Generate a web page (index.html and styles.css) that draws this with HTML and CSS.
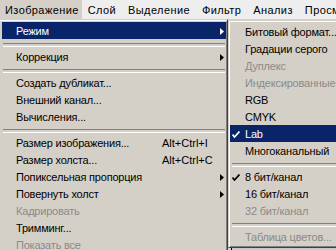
FILE: index.html
```html
<!DOCTYPE html>
<html lang="ru">

<head>
    <meta charset="UTF-8">
    <title>Изображение</title>
    <link rel="stylesheet" href="styles.css">
</head>

<body>
    <ul class="menubar">
        <li class="open">Изображение</li>
        <li>Слой</li>
        <li>Выделение</li>
        <li>Фильтр</li>
        <li>Анализ</li>
        <li>Просмотр</li>
    </ul>
    <div class="drop">
        <ul class="menu main">
            <li class="item hot"><span class="label">Режим</span><svg class="arrow" width="4" height="7" viewBox="0 0 4 7"><polygon points="0,0 4,3.5 0,7"/></svg></li>
            <li class="sep"></li>
            <li class="item"><span class="label">Коррекция</span><svg class="arrow" width="4" height="7" viewBox="0 0 4 7"><polygon points="0,0 4,3.5 0,7"/></svg></li>
            <li class="sep"></li>
            <li class="item"><span class="label">Создать дубликат...</span></li>
            <li class="item"><span class="label">Внешний канал...</span></li>
            <li class="item"><span class="label">Вычисления...</span></li>
            <li class="sep"></li>
            <li class="item"><span class="label">Размер изображения...</span><span class="key">Alt+Ctrl+I</span></li>
            <li class="item"><span class="label">Размер холста...</span><span class="key">Alt+Ctrl+C</span></li>
            <li class="item"><span class="label">Попиксельная пропорция</span><svg class="arrow" width="4" height="7" viewBox="0 0 4 7"><polygon points="0,0 4,3.5 0,7"/></svg></li>
            <li class="item"><span class="label">Повернуть холст</span><svg class="arrow" width="4" height="7" viewBox="0 0 4 7"><polygon points="0,0 4,3.5 0,7"/></svg></li>
            <li class="item off"><span class="label">Кадрировать</span></li>
            <li class="item"><span class="label">Тримминг...</span></li>
            <li class="item off"><span class="label">Показать все</span></li>
        </ul>
        <div class="side">
            <ul class="menu sub">
                <li class="item"><span class="mark"></span><span class="label">Битовый формат...</span></li>
                <li class="item"><span class="mark"></span><span class="label">Градации серого</span></li>
                <li class="item off"><span class="mark"></span><span class="label">Дуплекс</span></li>
                <li class="item off"><span class="mark"></span><span class="label">Индексированные</span></li>
                <li class="item"><span class="mark"></span><span class="label">RGB</span></li>
                <li class="item"><span class="mark"></span><span class="label">CMYK</span></li>
                <li class="item hot"><span class="mark"><svg width="8" height="8" viewBox="0 0 8 8"><polyline points="0.5,3.5 2.5,6 7.5,0.5"/></svg></span><span class="label">Lab</span></li>
                <li class="item"><span class="mark"></span><span class="label">Многоканальный</span></li>
                <li class="sep"></li>
                <li class="item"><span class="mark"><svg width="8" height="8" viewBox="0 0 8 8"><polyline points="0.5,3.5 2.5,6 7.5,0.5"/></svg></span><span class="label">8 бит/канал</span></li>
                <li class="item"><span class="mark"></span><span class="label">16 бит/канал</span></li>
                <li class="item off"><span class="mark"></span><span class="label">32 бит/канал</span></li>
                <li class="sep"></li>
                <li class="item off"><span class="mark"></span><span class="label">Таблица цветов...</span></li>
            </ul>
            <div class="doc"></div>
        </div>
    </div>
</body>

</html>
```

FILE: styles.css
```css
* {
    margin: 0;
    padding: 0;
    list-style: none;
    box-sizing: border-box;
}

body {
    width: 336px;
    height: 250px;
    overflow: hidden;
    background: #d4d0c8;
    color: #000;
    font: 11px "Liberation Sans", Tahoma, sans-serif;
}

.menubar {
    display: flex;
    height: 19px;
    background: #eeeeee;
    white-space: nowrap;
    letter-spacing: 0.4px;
}

.menubar li {
    padding: 1px 6px 0;
    line-height: 18px;
}

.menubar .open {
    background: #d4d0c8;
    padding: 1px 3px 0 5px;
}

.drop {
    display: flex;
    align-items: flex-start;
}

.menu {
    flex-shrink: 0;
    padding: 2px 1px;
    background: #d4d0c8;
    border: 1px solid;
    border-color: #d4d0c8 #404040 #404040 #d4d0c8;
    box-shadow: inset 1px 1px #fff, inset -1px -1px #808080;
    white-space: nowrap;
    letter-spacing: -0.2px;
}

.main {
    width: 228px;
    border-left: 0;
    padding-left: 2px;
    box-shadow: inset 0 1px #fff, inset -1px -1px #808080;
}

.item {
    display: flex;
    align-items: center;
    height: 17px;
    padding-top: 2px;
    line-height: 15px;
}

.main .item {
    padding-left: 14px;
    padding-right: 2px;
}

.item .label {
    flex: 1;
}

.item .key {
    width: 62px;
    letter-spacing: 0;
}

.arrow {
    fill: #000;
}

.hot {
    background: #0a246a;
    color: #fff;
}

.hot .arrow {
    fill: #fff;
}

.off {
    color: #8a8a8a;
}

.sep {
    height: 9px;
    padding: 4px 1px 3px;
}

.sep::before {
    content: "";
    display: block;
    height: 2px;
    border-top: 1px solid #808080;
    border-bottom: 1px solid #fff;
}

.side {
    flex-shrink: 0;
    width: 140px;
    margin-top: 1px;
}

.sub {
    width: 140px;
}

.sub .sep {
    padding-left: 2px;
}

.sub .item {
    padding-left: 2px;
}

.mark {
    width: 13px;
    display: flex;
    align-items: center;
}

.mark svg {
    fill: none;
    stroke: #000;
    stroke-width: 1.7;
}

.hot .mark svg {
    stroke: #fff;
}

.doc {
    height: 8px;
    margin-left: 3px;
    border-left: 1px solid #000;
    background: #c9c9c9;
}
```
